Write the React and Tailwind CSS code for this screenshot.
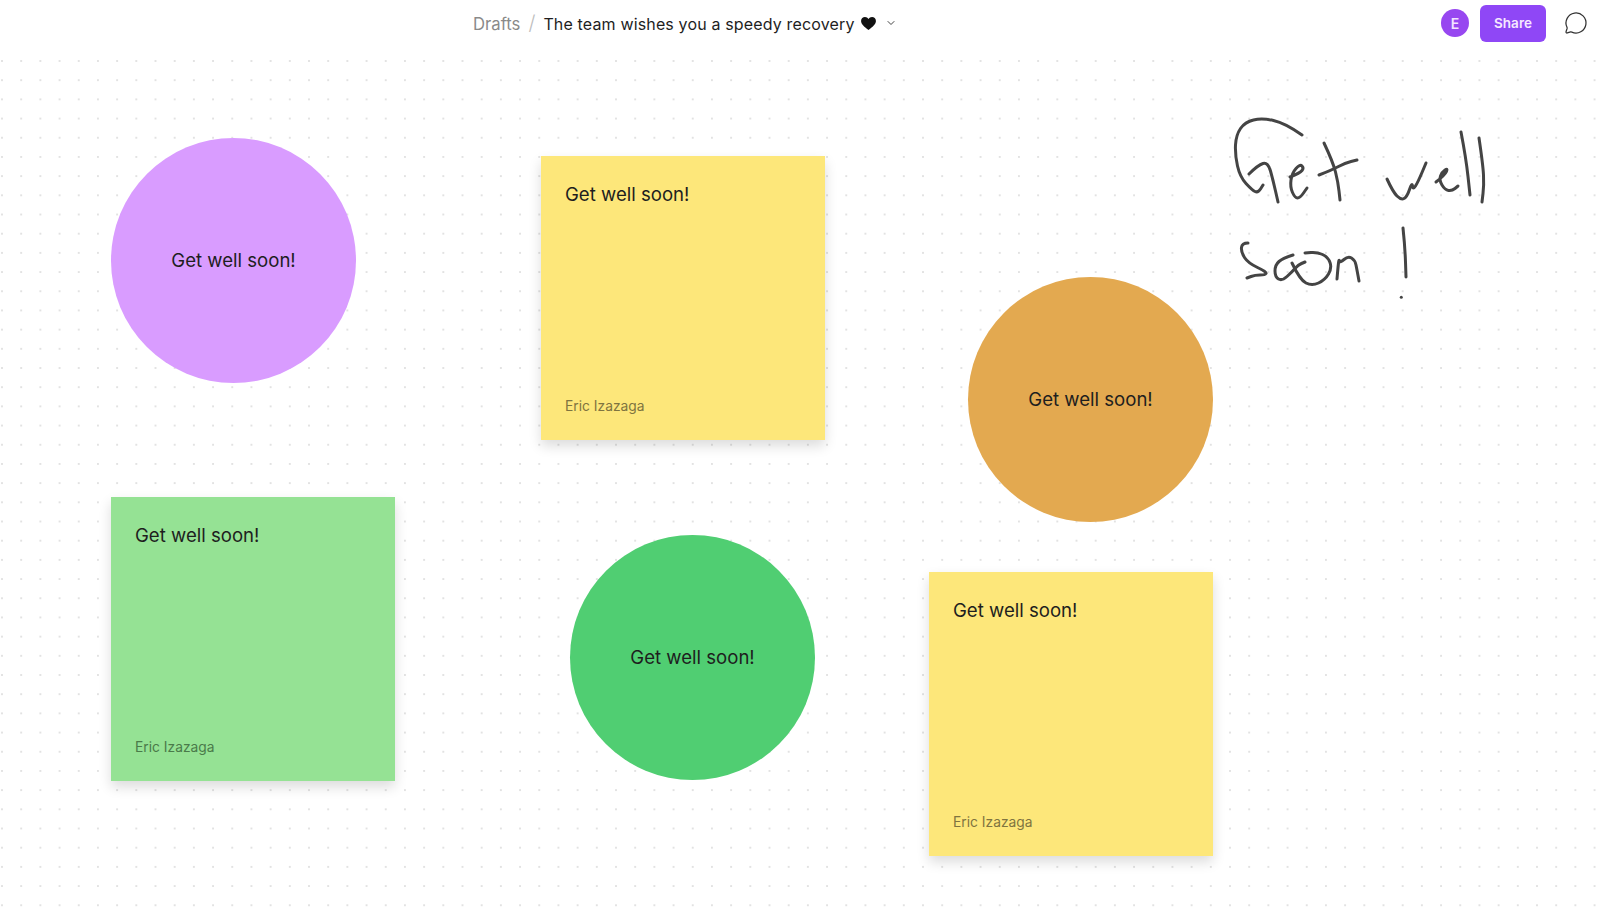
import React from "react";
import { ChevronDown, MessageCircle } from "lucide-react";

const CIRCLES = [
  { id: "purple", pos: "left-[111px] top-[82px]", color: "bg-[#d99cff]" },
  { id: "orange", pos: "left-[968px] top-[221px]", color: "bg-[#e3a950]" },
  { id: "green", pos: "left-[570px] top-[479px]", color: "bg-[#50ce72]" },
];

const STICKIES = [
  { id: "yellow-1", pos: "left-[541px] top-[100px]", color: "bg-[#fde77a]", author: "text-[#7f7440]" },
  { id: "green", pos: "left-[111px] top-[441px]", color: "bg-[#95e294]", author: "text-[#4a7a4a]" },
  { id: "yellow-2", pos: "left-[929px] top-[516px]", color: "bg-[#fde77a]", author: "text-[#7f7440]" },
];

// handwriting, traced in page coordinates
const STROKES = [
  [[1302, 135], [1285, 123], [1262, 118], [1245, 122], [1236, 135], [1235, 155], [1240, 177], [1252, 190], [1258, 193], [1263, 185]],
  [[1249, 174], [1258, 165], [1268, 162], [1273, 180], [1278, 202]],
  [[1290, 177], [1300, 173], [1304, 168], [1300, 164], [1292, 173], [1290, 187], [1295, 198], [1300, 198], [1307, 188]],
  [[1324, 143], [1333, 162], [1338, 182], [1340, 200]],
  [[1319, 175], [1332, 170], [1345, 163], [1357, 160]],
  [[1387, 179], [1393, 192], [1401, 200], [1407, 197], [1412, 182], [1413, 190], [1418, 182], [1426, 163]],
  [[1436, 182], [1445, 175], [1448, 168], [1442, 172], [1439, 180], [1445, 190], [1452, 191], [1458, 186]],
  [[1461, 132], [1466, 158], [1470, 195]],
  [[1479, 138], [1483, 165], [1484, 185], [1482, 202]],
  [[1248, 243], [1242, 243], [1241, 252], [1248, 263], [1267, 272], [1265, 275], [1255, 275], [1247, 278]],
  [[1293, 255], [1283, 258], [1275, 265], [1275, 277], [1282, 281], [1292, 272], [1298, 265], [1305, 262]],
  [[1292, 263], [1300, 280], [1312, 286], [1325, 280], [1332, 268], [1328, 257], [1317, 252], [1305, 253]],
  [[1337, 279], [1338, 267], [1339, 259], [1340, 263], [1348, 256], [1355, 260], [1357, 270], [1359, 281]],
  [[1403, 228], [1405, 247], [1406, 277]],
];

const toPath = (pts) => {
  let d = `M${pts[0][0]} ${pts[0][1]}`;
  for (let i = 1; i < pts.length - 1; i++) {
    const mx = (pts[i][0] + pts[i + 1][0]) / 2;
    const my = (pts[i][1] + pts[i + 1][1]) / 2;
    d += `Q${pts[i][0]} ${pts[i][1]} ${mx} ${my}`;
  }
  const last = pts[pts.length - 1];
  return `${d}L${last[0]} ${last[1]}`;
};

function Circle({ pos, color }) {
  return (
    <div className={`absolute ${pos} ${color} w-[245px] h-[245px] rounded-full flex items-center justify-center text-[18.6px] text-[#1e1e1e]`}>
      Get well soon!
    </div>
  );
}

function Sticky({ pos, color, author }) {
  return (
    <div className={`absolute ${pos} ${color} w-[283.5px] h-[283.5px] pl-6 pr-4 pt-6 pb-[23.5px] flex flex-col justify-between shadow-[0_6px_12px_rgba(0,0,0,0.14)]`}>
      <div className="text-[18.6px] leading-[28px] text-[#1e1e1e]">Get well soon!</div>
      <div className={`text-[13.8px] leading-[20px] ${author}`}>Eric Izazaga</div>
    </div>
  );
}

export default function App() {
  return (
    <div className="w-full h-[923px] flex flex-col overflow-hidden bg-white font-['Inter',sans-serif]">
      <header className="h-[56px] shrink-0 flex items-center pl-[473px] pr-[12px] pb-[10px]">
        <div className="flex items-baseline">
          <span className="text-[16.7px] text-[#8a8a8a]">Drafts</span>
          <span className="ml-[8px] text-[20px] font-light text-[#bdbdbd]">/</span>
          <span className="ml-[8px] text-[16px] tracking-[0.15px] text-[#1e1e1e]">The team wishes you a speedy recovery</span>
        </div>
        <svg className="ml-[6px]" width="15" height="13" viewBox="0 0 16 14">
          <path d="M8 14C3 10 0 7.5 0 4.2C0 1.7 2 0 4.2 0C5.8 0 7.2.8 8 2.2C8.8.8 10.2 0 11.8 0C14 0 16 1.7 16 4.2C16 7.5 13 10 8 14Z" fill="#111" />
        </svg>
        <ChevronDown className="ml-[9px] text-[#444]" size={12} strokeWidth={2} />
        <div className="ml-auto flex items-center">
          <div className="w-[28px] h-[28px] rounded-full bg-[#9747f0] flex items-center justify-center text-[14px] font-semibold text-[#f3e3ff]">E</div>
          <button className="ml-[11px] w-[66px] h-[37px] rounded-[6px] bg-[#8f47f6] text-[13.5px] font-semibold text-[#f6e8ff]">Share</button>
          <MessageCircle className="ml-[18px] text-[#333]" size={24} strokeWidth={1.25} />
        </div>
      </header>
      <main className="relative flex-1 bg-[radial-gradient(circle,#e2e2e2_0.8px,transparent_1.2px)] bg-[size:19.2px_19.2px] bg-[position:-7.6px_-4.6px]">
        {CIRCLES.map((c) => (
          <Circle key={c.id} pos={c.pos} color={c.color} />
        ))}
        {STICKIES.map((s) => (
          <Sticky key={s.id} pos={s.pos} color={s.color} author={s.author} />
        ))}
        <svg className="absolute left-[1220px] top-[44px]" width="290" height="210" viewBox="1220 100 290 210" fill="none">
          {STROKES.map((pts, i) => (
            <path key={i} d={toPath(pts)} stroke="#444" strokeWidth="3" strokeLinecap="round" strokeLinejoin="round" />
          ))}
          <circle cx="1401.3" cy="297.3" r="1.5" fill="#444" />
        </svg>
      </main>
    </div>
  );
}
